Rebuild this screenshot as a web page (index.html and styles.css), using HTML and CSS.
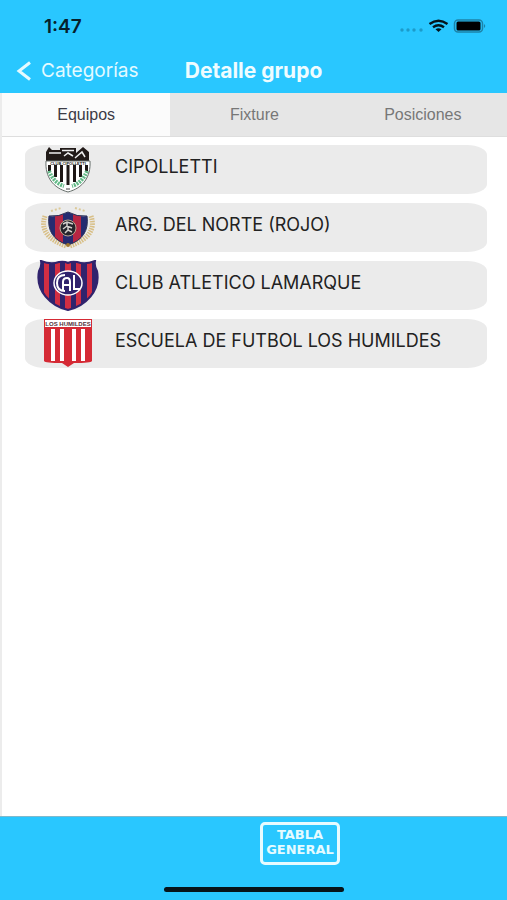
FILE: index.html
```html
<!DOCTYPE html>
<html lang="es">
<head>
    <meta charset="UTF-8">
    <meta name="viewport" content="width=device-width, initial-scale=1.0">
    <title>Detalle grupo</title>
    <link rel="stylesheet" href="styles.css">
</head>
<body>
    <header class="header">
        <!-- Status bar -->
        <div class="status-bar">
            <span class="time">1:47</span>
            <svg class="status-icons" viewBox="0 0 86 14" aria-hidden="true">
                <g fill="#1c9bca">
                    <circle cx="2" cy="11" r="1.7"/>
                    <circle cx="8" cy="11" r="1.7"/>
                    <circle cx="14" cy="11" r="1.7"/>
                    <circle cx="21" cy="11" r="1.7"/>
                </g>
                <g fill="none" stroke="#04141c" stroke-width="2.4">
                    <path d="M29.500 5Q38.500-1.500 47.500 5"/>
                    <path d="M33 8.300Q38.500 4.300 44 8.300"/>
                </g>
                <path d="M35.500 10.300Q38.500 8.300 41.500 10.300L38.500 13Z" fill="#04141c"/>
                <rect x="54.500" y="1" width="28" height="12" rx="3.500" fill="none" stroke="#1d83a8" stroke-width="1.500"/>
                <rect x="56.500" y="2.500" width="24" height="9" rx="1.500" fill="#000"/>
                <path d="M84 5Q86.500 7 84 9Z" fill="#1d83a8"/>
            </svg>
        </div>

        <div class="nav-bar">
            <a href="#" class="back-link">
                <svg viewBox="0 0 16 20" aria-hidden="true"><path d="M14 1.500L3 10L14 18.500" fill="none" stroke="currentColor" stroke-width="3"/></svg>
                Categorías
            </a>
            <h1>Detalle grupo</h1>
        </div>
    </header>

    <main class="content">
        <nav class="tabs">
            <button type="button" class="tab active">Equipos</button>
            <button type="button" class="tab">Fixture</button>
            <button type="button" class="tab">Posiciones</button>
        </nav>

        <ul class="team-list">
            <li class="team">
                <svg class="crest" viewBox="0 0 62 51" aria-hidden="true">
                    <clipPath id="c1"><path d="M9 17H53C54 33 46 44 31 48C16 44 8 33 9 17Z"/></clipPath>
                    <path d="M9 17H53C54 33 46 44 31 48C16 44 8 33 9 17Z" fill="#fff"/>
                    <g clip-path="url(#c1)" stroke="#1d1715" stroke-width="3">
                        <path d="M12.500 20V27M18.500 20V33M24.500 20V38M31 20V41M37.500 20V38M43.500 20V33M49.500 20V27"/>
                    </g>
                    <path d="M12 27Q17 39 27 42M50 27Q45 39 35 42" fill="none" stroke="#62b987" stroke-width="4" stroke-dasharray="2 1"/>
                    <path d="M9 17V8L12 3L15 6H23V4H39V9L46 3L52 8V17Z" fill="#211a18"/>
                    <path d="M12 9H24M25 6.500H37M27 12L31 9L36 12M38 14L45 8L48 13" stroke="#eee" stroke-width="1.500" fill="none"/>
                    <path d="M10 17H52V21H10Z" fill="#fff"/>
                    <text x="31" y="20.500" class="crest-text">CLUB CIPOLLETTI</text>
                    <path d="M9 17H53C54 33 46 44 31 48C16 44 8 33 9 17Z" fill="none" stroke="#68706c" stroke-width="1"/>
                    <path d="M29 45H33" stroke="#444"/>
                </svg>
                <span class="team-name">CIPOLLETTI</span>
            </li>
            <li class="team">
                <svg class="crest" viewBox="0 0 62 51" aria-hidden="true">
                    <g fill="none" stroke="#d8bf87" stroke-width="5" stroke-dasharray="1.500 1">
                        <path d="M8 14Q1 34 29 44"/>
                        <path d="M54 14Q61 34 33 44"/>
                    </g>
                    <path d="M14 9L24 6M38 6L48 9" stroke="#dcc998" stroke-width="2" stroke-dasharray="2 2"/>
                    <clipPath id="c2"><path d="M31 10Q22 15 12 14Q9 36 31 43Q53 36 50 14Q40 15 31 10Z"/></clipPath>
                    <g clip-path="url(#c2)">
                        <path d="M9 9H53V44H9Z" fill="#252b70"/>
                        <path d="M18 9H26V44H18ZM36 9H44V44H36Z" fill="#b62643"/>
                    </g>
                    <path d="M31 10Q22 15 12 14Q9 36 31 43Q53 36 50 14Q40 15 31 10Z" fill="none" stroke="#2b3057" stroke-width="1"/>
                    <circle cx="31" cy="26" r="8" fill="#24252c" stroke="#baa891" stroke-width="1"/>
                    <path d="M26 22L30 20L36 22M26 27L30 24L35 26M28 31L31 28L35 30M30 20V24M31 28V24" fill="none" stroke="#d3d0cc" stroke-width="1.500"/>
                    <circle cx="31" cy="43" r="2" fill="#a1782e"/>
                </svg>
                <span class="team-name">ARG. DEL NORTE (ROJO)</span>
            </li>
            <li class="team">
                <svg class="crest" viewBox="0 0 62 51" aria-hidden="true">
                    <clipPath id="c3"><path d="M4 1Q14 5 22 2Q27 1 31 3Q35 1 40 2Q48 5 58 1Q57 6 60 11C64 31 48 46 31 50C14 46-2 31 2 11Q5 6 4 1Z"/></clipPath>
                    <g clip-path="url(#c3)">
                        <path d="M0 0H62V51H0Z" fill="#30236d"/>
                        <path d="M7 0H12V51H7ZM18 0H23V51H18ZM28 0H34V51H28ZM39 0H44V51H39ZM50 0H55V51H50Z" fill="#d12e43"/>
                    </g>
                    <path d="M4 1Q14 5 22 2Q27 1 31 3Q35 1 40 2Q48 5 58 1Q57 6 60 11C64 31 48 46 31 50C14 46-2 31 2 11Q5 6 4 1Z" fill="none" stroke="#30236d" stroke-width="2"/>
                    <ellipse cx="31" cy="23" rx="14" ry="12" fill="#30236d" stroke="#fff" stroke-width="1.500"/>
                    <path d="M28 15Q20 15 20 23Q20 31 28 31M26 31V22Q26 18 30 18Q33 18 33 22V31M26 25H33M37 15V29H43" fill="none" stroke="#fff" stroke-width="2"/>
                </svg>
                <span class="team-name">CLUB ATLETICO LAMARQUE</span>
            </li>
            <li class="team">
                <svg class="crest" viewBox="0 0 62 51" aria-hidden="true">
                    <path d="M7 1H55V43Q54 45 37 45L31 49L25 45Q8 45 7 43Z" fill="#d52a35"/>
                    <path d="M8 2H54V9H8Z" fill="#fff"/>
                    <path d="M14 11H18V43H14ZM23 11H27V43H23ZM35 11H39V43H35ZM44 11H48V43H44Z" fill="#fff"/>
                    <text x="31" y="8" class="crest-text large">LOS HUMILDES</text>
                </svg>
                <span class="team-name">ESCUELA DE FUTBOL LOS HUMILDES</span>
            </li>
        </ul>
    </main>

    <footer class="footer">
        <button type="button" class="table-btn">TABLA<br>GENERAL</button>
        <div class="home-indicator"></div>
    </footer>
</body>
</html>
```
FILE: styles.css
```css
* {
    margin: 0;
    padding: 0;
    box-sizing: border-box;
}

body {
    font-family: Inter, "Liberation Sans", sans-serif;
    background: #fff;
    color: #222;
    min-height: 100vh;
    display: flex;
    flex-direction: column;
}

.header {
    background: #29c7ff;
    color: #fff;
}

.status-bar {
    height: 48px;
    padding: 4px 21px 0 44px;
    display: flex;
    align-items: center;
    justify-content: space-between;
}

.time {
    font-size: 19px;
    font-weight: 600;
    color: #06202b;
}

.status-icons {
    width: 86px;
    height: 14px;
}

.nav-bar {
    height: 45px;
    padding: 0 16px;
    display: grid;
    grid-template-columns: 1fr auto 1fr;
    align-items: center;
}

.back-link {
    display: flex;
    align-items: center;
    gap: 9px;
    font-size: 19px;
    color: #e4faff;
    text-decoration: none;
}

.back-link svg {
    width: 16px;
    height: 20px;
}

.nav-bar h1 {
    font-size: 21px;
    font-weight: 700;
    color: #effcff;
}

.content {
    flex: 1;
    border-left: 2px solid #ececec;
}

.tabs {
    display: grid;
    grid-template-columns: repeat(3, 1fr);
    border-bottom: 1px solid #dedede;
}

.tab {
    height: 43px;
    border: none;
    background: #e6e6e6;
    color: #777;
    font-family: "Liberation Sans", Arial, sans-serif;
    font-size: 16px;
    cursor: pointer;
}

.tab.active {
    background: #fbfbfb;
    color: #3c3c46;
}

.team-list {
    list-style: none;
    padding: 8px 20px 8px 23px;
    display: flex;
    flex-direction: column;
    gap: 9px;
}

.team {
    height: 49px;
    padding: 0 12px;
    display: flex;
    align-items: center;
    gap: 16px;
    background: #ebebeb;
    border-radius: 20px / 10px;
}

.crest {
    width: 62px;
    height: 51px;
    flex-shrink: 0;
}

.crest-text {
    font-family: "Liberation Sans", Arial, sans-serif;
    font-size: 4px;
    font-weight: 700;
    text-anchor: middle;
    fill: #222;
}

.crest-text.large {
    font-size: 6px;
    fill: #553038;
}

.team-name {
    font-size: 18px;
    line-height: 20px;
    padding-bottom: 5px;
}

.footer {
    background: #29c7ff;
    border-top: 1px solid #7fb9cc;
    padding: 5px 0 8px;
    display: flex;
    flex-direction: column;
    align-items: center;
    gap: 22px;
}

.table-btn {
    margin-left: 93px;
    width: 80px;
    height: 43px;
    padding-bottom: 3px;
    border: 3px solid #e6fbff;
    border-radius: 5px;
    background: none;
    color: #e6fbff;
    font-family: "DejaVu Sans", sans-serif;
    font-size: 13px;
    font-weight: 700;
    line-height: 15px;
    cursor: pointer;
}

.home-indicator {
    width: 180px;
    height: 5px;
    border-radius: 3px;
    background: #06141a;
}
```
